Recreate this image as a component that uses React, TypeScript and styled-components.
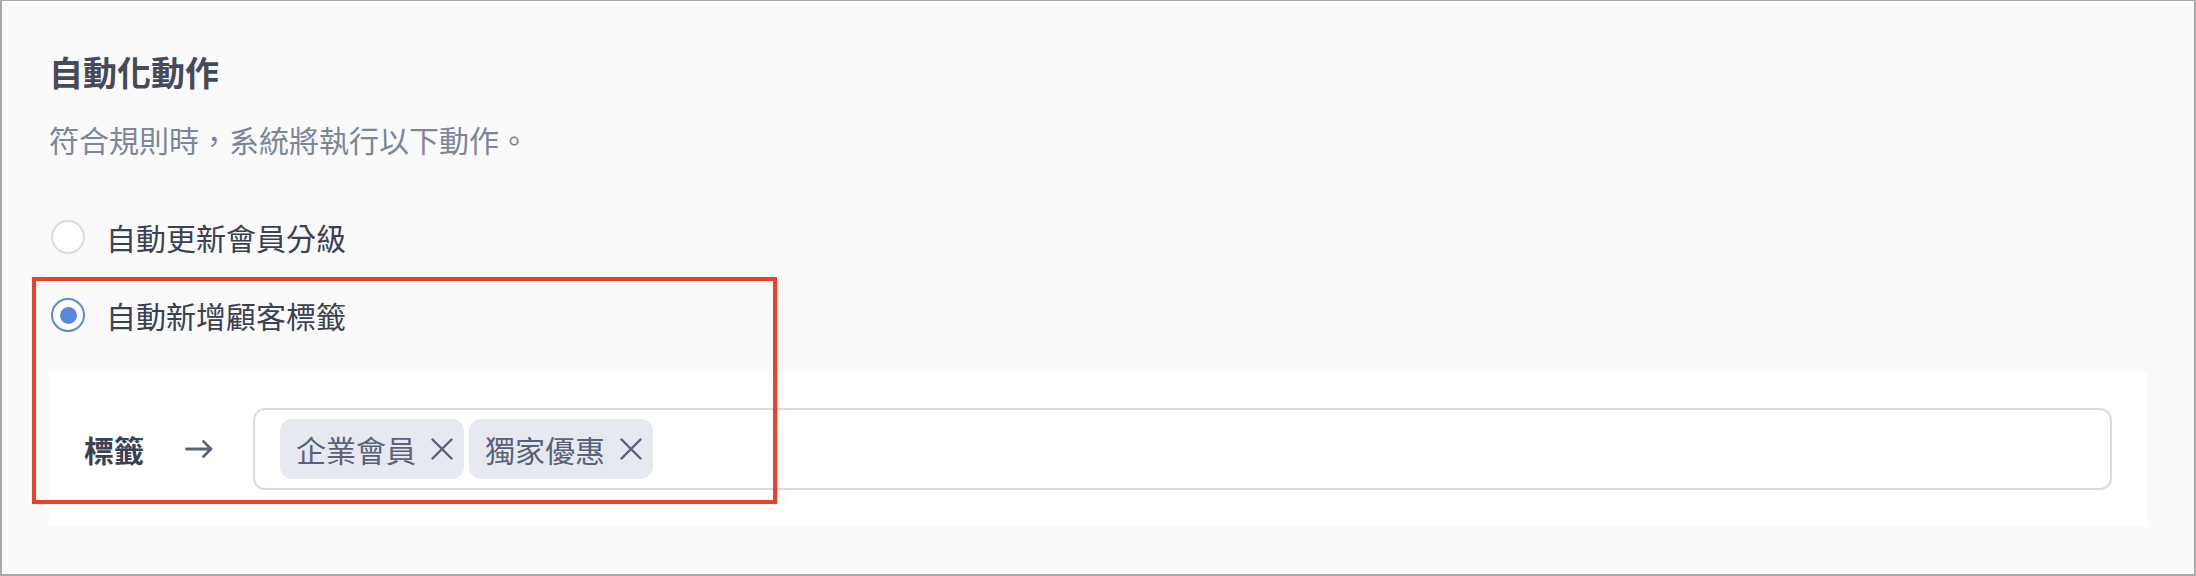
import React from "react";
import styled, { createGlobalStyle } from "styled-components";

const GlobalStyle = createGlobalStyle`
  html, body {
    margin: 0;
    padding: 0;
    background: #fafafa;
  }
  body {
    font-family: "Noto Sans CJK TC", "Noto Sans", sans-serif;
  }
  * { box-sizing: border-box; }
`;

const Frame = styled.div`
  position: relative;
  width: 2196px;
  height: 576px;
  background: #fafafa;
  border: 2px solid #a8a8a8;
  border-top-width: 1px;
  padding: 54px 47px 0 47px;
`;

const Title = styled.h2`
  margin: 0;
  font-size: 34px;
  line-height: 34px;
  font-weight: 700;
  color: #434a59;
`;

const Subtitle = styled.p`
  margin: 35px 0 0 0;
  font-size: 30px;
  line-height: 30px;
  font-weight: 400;
  color: #7d8699;
`;

const Options = styled.div`
  margin-top: 63px;
  display: flex;
  flex-direction: column;
  gap: 38px;
`;

const OptionRow = styled.label`
  display: flex;
  align-items: center;
  gap: 21px;
  height: 40px;
  padding-left: 2px;
  font-size: 30px;
  line-height: 30px;
  color: #3a4150;
  cursor: pointer;
`;

const Radio = styled.span<{ $checked?: boolean }>`
  position: relative;
  width: 34px;
  height: 34px;
  flex: none;
  border-radius: 50%;
  background: #ffffff;
  border: 2px solid ${(p) => (p.$checked ? "#5b87df" : "#d6dee8")};
  &::after {
    content: "";
    display: ${(p) => (p.$checked ? "block" : "none")};
    position: absolute;
    left: 50%;
    top: 50%;
    width: 17px;
    height: 17px;
    margin: -8.5px 0 0 -8.5px;
    border-radius: 50%;
    background: #5b87df;
  }
`;

const Panel = styled.div`
  margin-top: 38px;
  background: #ffffff;
  padding: 35px 35px 36px 35px;
  display: flex;
  align-items: center;
`;

const FieldLabel = styled.span`
  font-size: 30px;
  line-height: 30px;
  font-weight: 700;
  color: #3a4150;
  white-space: nowrap;
`;

const ArrowIcon = styled.svg`
  flex: none;
  margin: 0 40px 0 41px;
  color: #5b6479;
`;

const TagInput = styled.div`
  flex: 1;
  display: flex;
  align-items: center;
  gap: 5px;
  border: 2px solid #d5dce6;
  border-radius: 12px;
  padding: 9px 25px;
  background: #ffffff;
`;

const Tag = styled.span`
  display: inline-flex;
  align-items: center;
  gap: 15px;
  height: 60px;
  padding: 0 11px 0 16px;
  border-radius: 12px;
  background: #e6e9ef;
  color: #586379;
  font-size: 30px;
  line-height: 30px;
  white-space: nowrap;
`;

const CloseIcon = styled.svg`
  flex: none;
  color: #586379;
`;

const Highlight = styled.div`
  position: absolute;
  left: 30px;
  top: 276px;
  width: 745px;
  height: 227px;
  border: 4px solid #e8422a;
  pointer-events: none;
`;

const Arrow = () => (
  <ArrowIcon width="28" height="18" viewBox="0 0 28 18" fill="none">
    <path
      d="M1.5 9H26M18.5 1.5L26 9L18.5 16.5"
      stroke="currentColor"
      strokeWidth="2.8"
      strokeLinecap="round"
      strokeLinejoin="round"
    />
  </ArrowIcon>
);

const Close = () => (
  <CloseIcon width="22" height="22" viewBox="0 0 22 22" fill="none">
    <path
      d="M1.5 1.5L20.5 20.5M20.5 1.5L1.5 20.5"
      stroke="currentColor"
      strokeWidth="2.4"
      strokeLinecap="round"
    />
  </CloseIcon>
);

const tags = ["企業會員", "獨家優惠"];

export default function App() {
  return (
    <>
      <GlobalStyle />
      <Frame>
        <Title>自動化動作</Title>
        <Subtitle>符合規則時，系統將執行以下動作。</Subtitle>
        <Options>
          <OptionRow>
            <Radio />
            自動更新會員分級
          </OptionRow>
          <OptionRow>
            <Radio $checked />
            自動新增顧客標籤
          </OptionRow>
        </Options>
        <Panel>
          <FieldLabel>標籤</FieldLabel>
          <Arrow />
          <TagInput>
            {tags.map((t) => (
              <Tag key={t}>
                {t}
                <Close />
              </Tag>
            ))}
          </TagInput>
        </Panel>
        <Highlight />
      </Frame>
    </>
  );
}
